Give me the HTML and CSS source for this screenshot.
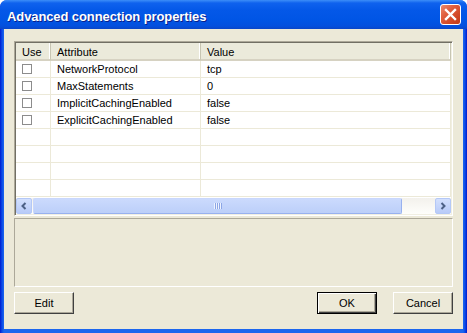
FILE: index.html
```html
<!DOCTYPE html>
<html lang="en">
<head>
    <meta charset="UTF-8" />
    <title>Advanced connection properties</title>
    <link rel="stylesheet" href="styles.css">
</head>
<body>
    <div class="window">
        <div class="titlebar">
            <span class="title">Advanced connection properties</span>
            <div class="close">
                <svg width="13" height="13" viewBox="0 0 13 13">
                    <path d="M2 2 L11 11 M11 2 L2 11" stroke="#fff" stroke-width="2.4" stroke-linecap="square" fill="none"/>
                </svg>
            </div>
        </div>
        <div class="client">
            <div class="listview">
                <div class="row head">
                    <div class="cell">Use</div>
                    <div class="cell">Attribute</div>
                    <div class="cell">Value</div>
                </div>
                <div class="row">
                    <div class="cell"><span class="check"></span></div>
                    <div class="cell">NetworkProtocol</div>
                    <div class="cell">tcp</div>
                </div>
                <div class="row">
                    <div class="cell"><span class="check"></span></div>
                    <div class="cell">MaxStatements</div>
                    <div class="cell">0</div>
                </div>
                <div class="row">
                    <div class="cell"><span class="check"></span></div>
                    <div class="cell">ImplicitCachingEnabled</div>
                    <div class="cell">false</div>
                </div>
                <div class="row">
                    <div class="cell"><span class="check"></span></div>
                    <div class="cell">ExplicitCachingEnabled</div>
                    <div class="cell">false</div>
                </div>
                <div class="row"><div class="cell"></div><div class="cell"></div><div class="cell"></div></div>
                <div class="row"><div class="cell"></div><div class="cell"></div><div class="cell"></div></div>
                <div class="row"><div class="cell"></div><div class="cell"></div><div class="cell"></div></div>
                <div class="row"><div class="cell"></div><div class="cell"></div><div class="cell"></div></div>
                <div class="hscroll">
                    <div class="sb-btn">
                        <svg width="8" height="8" viewBox="0 0 8 8"><path d="M5.5 1 L2.5 4 L5.5 7" stroke="#4d6185" stroke-width="2" fill="none"/></svg>
                    </div>
                    <div class="sb-thumb"><span class="grip"></span></div>
                    <div class="sb-track"></div>
                    <div class="sb-btn">
                        <svg width="8" height="8" viewBox="0 0 8 8"><path d="M2.5 1 L5.5 4 L2.5 7" stroke="#4d6185" stroke-width="2" fill="none"/></svg>
                    </div>
                </div>
            </div>
            <div class="panel"></div>
            <div class="buttons">
                <button class="btn">Edit</button>
                <span class="spacer"></span>
                <button class="btn default">OK</button>
                <button class="btn">Cancel</button>
            </div>
        </div>
    </div>
</body>
</html>
```

FILE: styles.css
```css
*{
    margin:0;
    padding:0;
    box-sizing:border-box;
}
body{
    width:467px;
    height:333px;
    overflow:hidden;
    font-family:"Liberation Sans", Arial, sans-serif;
    font-size:11px;
    color:#000;
    background:#fff;
}
.window{
    width:467px;
    height:333px;
    border-radius:7px 7px 0 0;
    overflow:hidden;
    display:flex;
    flex-direction:column;
    background:linear-gradient(to right, #0019cf 0, #0b4be6 2px, #1c66ee 4px, #1c66ee 463px, #0b4be6 465px, #0019cf 467px);
}
.titlebar{
    height:29px;
    flex:none;
    display:flex;
    align-items:center;
    padding:3px 6px 0 7px;
    background:linear-gradient(to bottom, #3c8ef8 0, #0f62ee 3px, #0458e8 10px, #0055e5 20px, #0350de 26px, #0a46c8 29px);
}
.title{
    flex:1;
    color:#fff;
    font-weight:bold;
    font-size:13px;
    text-shadow:1px 1px 0 #0a1f8a;
    letter-spacing:-0.1px;
}
.close{
    width:21px;
    height:21px;
    margin-top:-3px;
    border:1px solid #fff;
    border-radius:3px;
    background:linear-gradient(135deg, #ec8a6c 0, #e0603f 35%, #cf4422 75%, #c13a18 100%);
    display:flex;
    align-items:center;
    justify-content:center;
}
.client{
    flex:1;
    margin:0 4px 4px;
    background:#ece9d8;
    padding:12px 10px 15px;
    display:flex;
    flex-direction:column;
}
.listview{
    height:175px;
    background:#fff;
    border:1px solid;
    border-color:#aca899 #fff #fff #aca899;
    box-shadow:inset 1px 1px 0 #716f64, inset -1px -1px 0 #f1efe2;
    padding:1px;
    display:flex;
    flex-direction:column;
}
.row{
    display:grid;
    grid-template-columns:35px 150px 1fr;
    height:17px;
    flex:none;
}
.cell{
    display:flex;
    align-items:center;
    padding-left:6px;
    border-right:1px solid #ece9d8;
    border-bottom:1px solid #ece9d8;
    white-space:nowrap;
    overflow:hidden;
}
.head{
    height:18px;
    background:#ebeadb;
}
.head .cell{
    border-bottom:2px solid #d6d2c2;
    border-right:1px solid #c7c5b2;
    box-shadow:inset -1px 0 0 #fff;
    padding-top:1px;
}
.check{
    width:10px;
    height:10px;
    border:1px solid #8c8c8c;
    background:#fff;
}
.hscroll{
    height:16px;
    flex:none;
    margin-top:auto;
    display:flex;
    background:linear-gradient(to bottom, #f3f1ec, #fefefb);
}
.sb-btn{
    width:16px;
    height:16px;
    border:1px solid #b4c8f6;
    border-radius:2px;
    background:linear-gradient(to bottom, #d3e0fd, #b8cbf8);
    display:flex;
    align-items:center;
    justify-content:center;
}
.sb-thumb{
    width:369px;
    margin-left:1px;
    border:1px solid #98b1ef;
    border-color:#c9d7fc #98b1ef #98b1ef #c9d7fc;
    border-radius:2px;
    background:linear-gradient(to bottom, #cbdafd, #bccff9);
    display:flex;
    align-items:center;
    justify-content:center;
}
.grip{
    width:8px;
    height:6px;
    background:repeating-linear-gradient(to right, #eef3fe 0, #eef3fe 1px, #8ca6e6 1px, #8ca6e6 2px);
}
.sb-track{
    flex:1;
}
.panel{
    height:69px;
    margin-top:2px;
    border:1px solid;
    border-color:#aca899 #fff #fff #aca899;
}
.buttons{
    margin-top:5px;
    display:flex;
    gap:16px;
}
.spacer{
    flex:1;
}
.btn{
    width:60px;
    height:22px;
    font-family:"Liberation Sans", Arial, sans-serif;
    font-size:11px;
    color:#000;
    background:#ece9d8;
    border:1px solid;
    border-color:#fff #404040 #404040 #fff;
    box-shadow:inset -1px -1px 0 #aca899;
}
.default{
    border:1px solid #000;
    box-shadow:inset 1px 1px 0 #fff, inset -1px -1px 0 #404040, inset -2px -2px 0 #aca899;
}
```
